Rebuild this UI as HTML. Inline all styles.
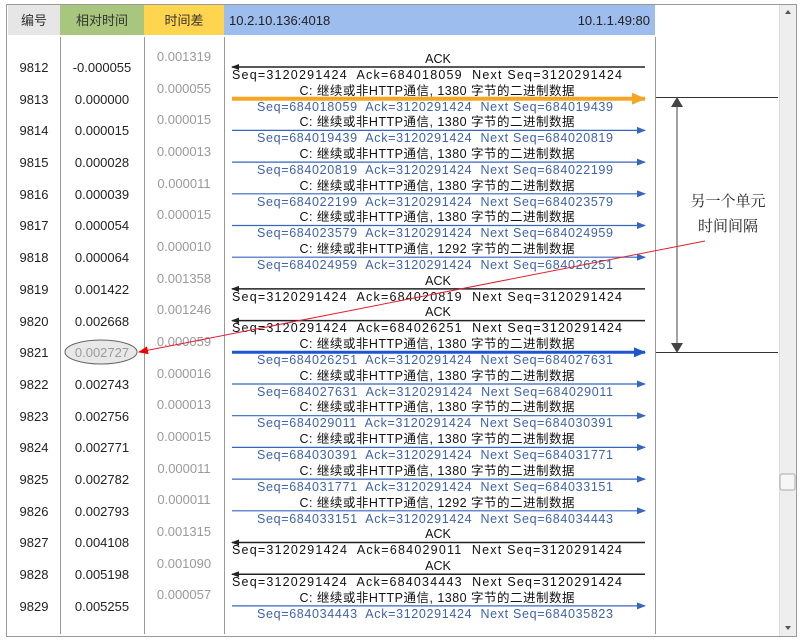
<!DOCTYPE html>
<html><head><meta charset="utf-8"><style>
body{margin:0;background:#fff;width:802px;height:640px;overflow:hidden}
svg{display:block}
text{font-family:"Liberation Sans","Noto Sans CJK SC",sans-serif;font-size:12.5px;white-space:pre}
.n{fill:#222;text-anchor:middle;font-size:13px}
.d{fill:#9a9a9a;text-anchor:middle;font-size:13px}
.k{fill:#111;text-anchor:middle}
.b{fill:#3f63aa;text-anchor:middle}
</style></head><body>
<svg width="802" height="640" xmlns="http://www.w3.org/2000/svg" xml:space="preserve">
<rect x="0" y="0" width="802" height="640" fill="#fff"/>
<rect x="6.5" y="4.5" width="790" height="632" fill="none" stroke="#999"/>
<rect x="8" y="5" width="52" height="30" fill="#e6e6e6"/>
<rect x="60" y="5" width="84" height="30" fill="#a8c67e"/>
<rect x="144" y="5" width="80" height="30" fill="#ffd54f"/>
<rect x="224" y="5" width="431" height="30" fill="#9dbdee"/>
<text x="34" y="25" class="n" style="fill:#333">编号</text>
<text x="102" y="25" class="n" style="fill:#333">相对时间</text>
<text x="184" y="25" class="n" style="fill:#333">时间差</text>
<text x="229" y="25" style="fill:#222;font-size:13px">10.2.10.136:4018</text>
<text x="650" y="25" style="fill:#222;font-size:13px;text-anchor:end">10.1.1.49:80</text>
<g stroke="#999" stroke-width="1">
<line x1="60.5" y1="37" x2="60.5" y2="634"/>
<line x1="144.5" y1="37" x2="144.5" y2="634"/>
<line x1="224.5" y1="37" x2="224.5" y2="634"/>
<line x1="655.5" y1="37" x2="655.5" y2="634"/>
</g>
<rect x="779" y="5" width="17" height="631" fill="#eee"/>
<line x1="779.5" y1="5" x2="779.5" y2="636" stroke="#ddd"/>
<rect x="780" y="474" width="15" height="16" rx="2" fill="#f6f6f6" stroke="#aaa"/>
<path d="M785 14 L788 10 L791 14Z" fill="#555"/>
<path d="M785 626 L788 630 L791 626Z" fill="#555"/>
<text x="34" y="72" class="n">9812</text><text x="102" y="72" class="n">-0.000055</text>
<text x="34" y="104" class="n">9813</text><text x="102" y="104" class="n">0.000000</text>
<text x="34" y="135" class="n">9814</text><text x="102" y="135" class="n">0.000015</text>
<text x="34" y="167" class="n">9815</text><text x="102" y="167" class="n">0.000028</text>
<text x="34" y="199" class="n">9816</text><text x="102" y="199" class="n">0.000039</text>
<text x="34" y="230" class="n">9817</text><text x="102" y="230" class="n">0.000054</text>
<text x="34" y="262" class="n">9818</text><text x="102" y="262" class="n">0.000064</text>
<text x="34" y="294" class="n">9819</text><text x="102" y="294" class="n">0.001422</text>
<text x="34" y="326" class="n">9820</text><text x="102" y="326" class="n">0.002668</text>
<text x="34" y="357" class="n">9821</text>
<text x="34" y="389" class="n">9822</text><text x="102" y="389" class="n">0.002743</text>
<text x="34" y="421" class="n">9823</text><text x="102" y="421" class="n">0.002756</text>
<text x="34" y="452" class="n">9824</text><text x="102" y="452" class="n">0.002771</text>
<text x="34" y="484" class="n">9825</text><text x="102" y="484" class="n">0.002782</text>
<text x="34" y="516" class="n">9826</text><text x="102" y="516" class="n">0.002793</text>
<text x="34" y="547" class="n">9827</text><text x="102" y="547" class="n">0.004108</text>
<text x="34" y="579" class="n">9828</text><text x="102" y="579" class="n">0.005198</text>
<text x="34" y="611" class="n">9829</text><text x="102" y="611" class="n">0.005255</text>
<ellipse cx="101" cy="352" rx="36" ry="12" fill="#e8e8e8" stroke="#666"/>
<text x="102" y="357" class="d">0.002727</text>
<text x="184" y="61" class="d">0.001319</text>
<text x="184" y="93" class="d">0.000055</text>
<text x="184" y="124" class="d">0.000015</text>
<text x="184" y="156" class="d">0.000013</text>
<text x="184" y="188" class="d">0.000011</text>
<text x="184" y="219" class="d">0.000015</text>
<text x="184" y="251" class="d">0.000010</text>
<text x="184" y="283" class="d">0.001358</text>
<text x="184" y="314" class="d">0.001246</text>
<text x="184" y="346" class="d">0.000059</text>
<text x="184" y="378" class="d">0.000016</text>
<text x="184" y="409" class="d">0.000013</text>
<text x="184" y="441" class="d">0.000015</text>
<text x="184" y="473" class="d">0.000011</text>
<text x="184" y="504" class="d">0.000011</text>
<text x="184" y="536" class="d">0.001315</text>
<text x="184" y="568" class="d">0.001090</text>
<text x="184" y="599" class="d">0.000057</text>
<defs>
<marker id="ak" markerWidth="8" markerHeight="6" refX="7" refY="3" orient="auto" markerUnits="userSpaceOnUse"><path d="M0 0L8 3L0 6Z" fill="#222"/></marker>
<marker id="ab" markerWidth="9" markerHeight="7" refX="8" refY="3.5" orient="auto" markerUnits="userSpaceOnUse"><path d="M0 0L9 3.5L0 7Z" fill="#3566c0"/></marker>
<marker id="abb" markerWidth="12" markerHeight="10" refX="11" refY="5" orient="auto" markerUnits="userSpaceOnUse"><path d="M0 0L12 5L0 10Z" fill="#1f55cf"/></marker>
<marker id="ao" markerWidth="14" markerHeight="12" refX="13" refY="6" orient="auto" markerUnits="userSpaceOnUse"><path d="M0 0L14 6L0 12Z" fill="#f5a623"/></marker>
<marker id="ar" markerWidth="10" markerHeight="8" refX="9" refY="4" orient="auto" markerUnits="userSpaceOnUse"><path d="M0 0L10 4L0 8Z" fill="#e00"/></marker>
<marker id="ag" markerWidth="10" markerHeight="12" refX="9" refY="6" orient="auto" markerUnits="userSpaceOnUse"><path d="M0 0L10 6L0 12Z" fill="#444"/></marker>
</defs>
<g fill="none">
<line x1="645" y1="67" x2="232" y2="67" stroke="#222" stroke-width="1.5" marker-end="url(#ak)"/>
<line x1="232" y1="98.7" x2="645" y2="98.7" stroke="#f5a623" stroke-width="4" marker-end="url(#ao)"/>
<line x1="232" y1="130.4" x2="645" y2="130.4" stroke="#3566c0" stroke-width="1.2" marker-end="url(#ab)"/>
<line x1="232" y1="162.1" x2="645" y2="162.1" stroke="#3566c0" stroke-width="1.2" marker-end="url(#ab)"/>
<line x1="232" y1="193.8" x2="645" y2="193.8" stroke="#3566c0" stroke-width="1.2" marker-end="url(#ab)"/>
<line x1="232" y1="225.5" x2="645" y2="225.5" stroke="#3566c0" stroke-width="1.2" marker-end="url(#ab)"/>
<line x1="232" y1="257.2" x2="645" y2="257.2" stroke="#3566c0" stroke-width="1.2" marker-end="url(#ab)"/>
<line x1="645" y1="288.9" x2="232" y2="288.9" stroke="#222" stroke-width="1.5" marker-end="url(#ak)"/>
<line x1="645" y1="320.6" x2="232" y2="320.6" stroke="#222" stroke-width="1.5" marker-end="url(#ak)"/>
<line x1="232" y1="352.3" x2="645" y2="352.3" stroke="#1f55cf" stroke-width="3" marker-end="url(#abb)"/>
<line x1="232" y1="384" x2="645" y2="384" stroke="#3566c0" stroke-width="1.2" marker-end="url(#ab)"/>
<line x1="232" y1="415.7" x2="645" y2="415.7" stroke="#3566c0" stroke-width="1.2" marker-end="url(#ab)"/>
<line x1="232" y1="447.4" x2="645" y2="447.4" stroke="#3566c0" stroke-width="1.2" marker-end="url(#ab)"/>
<line x1="232" y1="479.1" x2="645" y2="479.1" stroke="#3566c0" stroke-width="1.2" marker-end="url(#ab)"/>
<line x1="232" y1="510.8" x2="645" y2="510.8" stroke="#3566c0" stroke-width="1.2" marker-end="url(#ab)"/>
<line x1="645" y1="542.5" x2="232" y2="542.5" stroke="#222" stroke-width="1.5" marker-end="url(#ak)"/>
<line x1="645" y1="574.2" x2="232" y2="574.2" stroke="#222" stroke-width="1.5" marker-end="url(#ak)"/>
<line x1="232" y1="605.9" x2="645" y2="605.9" stroke="#3566c0" stroke-width="1.2" marker-end="url(#ab)"/>
</g>
<text x="438" y="63" class="k">ACK</text>
<text x="427" y="79" class="k" textLength="390">Seq=3120291424  Ack=684018059  Next Seq=3120291424</text>
<text x="437" y="95" class="k" textLength="275">C: 继续或非HTTP通信, 1380 字节的二进制数据</text>
<text x="435" y="111" class="b" textLength="356">Seq=684018059  Ack=3120291424  Next Seq=684019439</text>
<text x="437" y="126" class="k" textLength="275">C: 继续或非HTTP通信, 1380 字节的二进制数据</text>
<text x="435" y="142" class="b" textLength="356">Seq=684019439  Ack=3120291424  Next Seq=684020819</text>
<text x="437" y="158" class="k" textLength="275">C: 继续或非HTTP通信, 1380 字节的二进制数据</text>
<text x="435" y="174" class="b" textLength="356">Seq=684020819  Ack=3120291424  Next Seq=684022199</text>
<text x="437" y="190" class="k" textLength="275">C: 继续或非HTTP通信, 1380 字节的二进制数据</text>
<text x="435" y="206" class="b" textLength="356">Seq=684022199  Ack=3120291424  Next Seq=684023579</text>
<text x="437" y="221" class="k" textLength="275">C: 继续或非HTTP通信, 1380 字节的二进制数据</text>
<text x="435" y="237" class="b" textLength="356">Seq=684023579  Ack=3120291424  Next Seq=684024959</text>
<text x="437" y="253" class="k" textLength="275">C: 继续或非HTTP通信, 1292 字节的二进制数据</text>
<text x="435" y="269" class="b" textLength="356">Seq=684024959  Ack=3120291424  Next Seq=684026251</text>
<text x="438" y="285" class="k">ACK</text>
<text x="427" y="301" class="k" textLength="390">Seq=3120291424  Ack=684020819  Next Seq=3120291424</text>
<text x="438" y="316" class="k">ACK</text>
<text x="427" y="332" class="k" textLength="390">Seq=3120291424  Ack=684026251  Next Seq=3120291424</text>
<text x="437" y="348" class="k" textLength="275">C: 继续或非HTTP通信, 1380 字节的二进制数据</text>
<text x="435" y="364" class="b" textLength="356">Seq=684026251  Ack=3120291424  Next Seq=684027631</text>
<text x="437" y="380" class="k" textLength="275">C: 继续或非HTTP通信, 1380 字节的二进制数据</text>
<text x="435" y="396" class="b" textLength="356">Seq=684027631  Ack=3120291424  Next Seq=684029011</text>
<text x="437" y="411" class="k" textLength="275">C: 继续或非HTTP通信, 1380 字节的二进制数据</text>
<text x="435" y="427" class="b" textLength="356">Seq=684029011  Ack=3120291424  Next Seq=684030391</text>
<text x="437" y="443" class="k" textLength="275">C: 继续或非HTTP通信, 1380 字节的二进制数据</text>
<text x="435" y="459" class="b" textLength="356">Seq=684030391  Ack=3120291424  Next Seq=684031771</text>
<text x="437" y="475" class="k" textLength="275">C: 继续或非HTTP通信, 1380 字节的二进制数据</text>
<text x="435" y="491" class="b" textLength="356">Seq=684031771  Ack=3120291424  Next Seq=684033151</text>
<text x="437" y="507" class="k" textLength="275">C: 继续或非HTTP通信, 1292 字节的二进制数据</text>
<text x="435" y="523" class="b" textLength="356">Seq=684033151  Ack=3120291424  Next Seq=684034443</text>
<text x="438" y="538" class="k">ACK</text>
<text x="427" y="554" class="k" textLength="390">Seq=3120291424  Ack=684029011  Next Seq=3120291424</text>
<text x="438" y="570" class="k">ACK</text>
<text x="427" y="586" class="k" textLength="390">Seq=3120291424  Ack=684034443  Next Seq=3120291424</text>
<text x="437" y="602" class="k" textLength="275">C: 继续或非HTTP通信, 1380 字节的二进制数据</text>
<text x="435" y="618" class="b" textLength="356">Seq=684034443  Ack=3120291424  Next Seq=684035823</text>
<line x1="656" y1="97.5" x2="778" y2="97.5" stroke="#333"/>
<line x1="656" y1="352.5" x2="778" y2="352.5" stroke="#333"/>
<line x1="677" y1="225" x2="677" y2="98" stroke="#444" marker-end="url(#ag)"/>
<line x1="677" y1="225" x2="677" y2="352" stroke="#444" marker-end="url(#ag)"/>
<text x="728" y="206" style="font-family:'Noto Serif CJK SC',serif;font-size:15px;fill:#222;text-anchor:middle">另一个单元</text>
<text x="728" y="231" style="font-family:'Noto Serif CJK SC',serif;font-size:15px;fill:#222;text-anchor:middle">时间间隔</text>
<line x1="705" y1="241" x2="139" y2="352" stroke="#e02030" stroke-width="1" marker-end="url(#ar)"/>
</svg>
</body></html>
